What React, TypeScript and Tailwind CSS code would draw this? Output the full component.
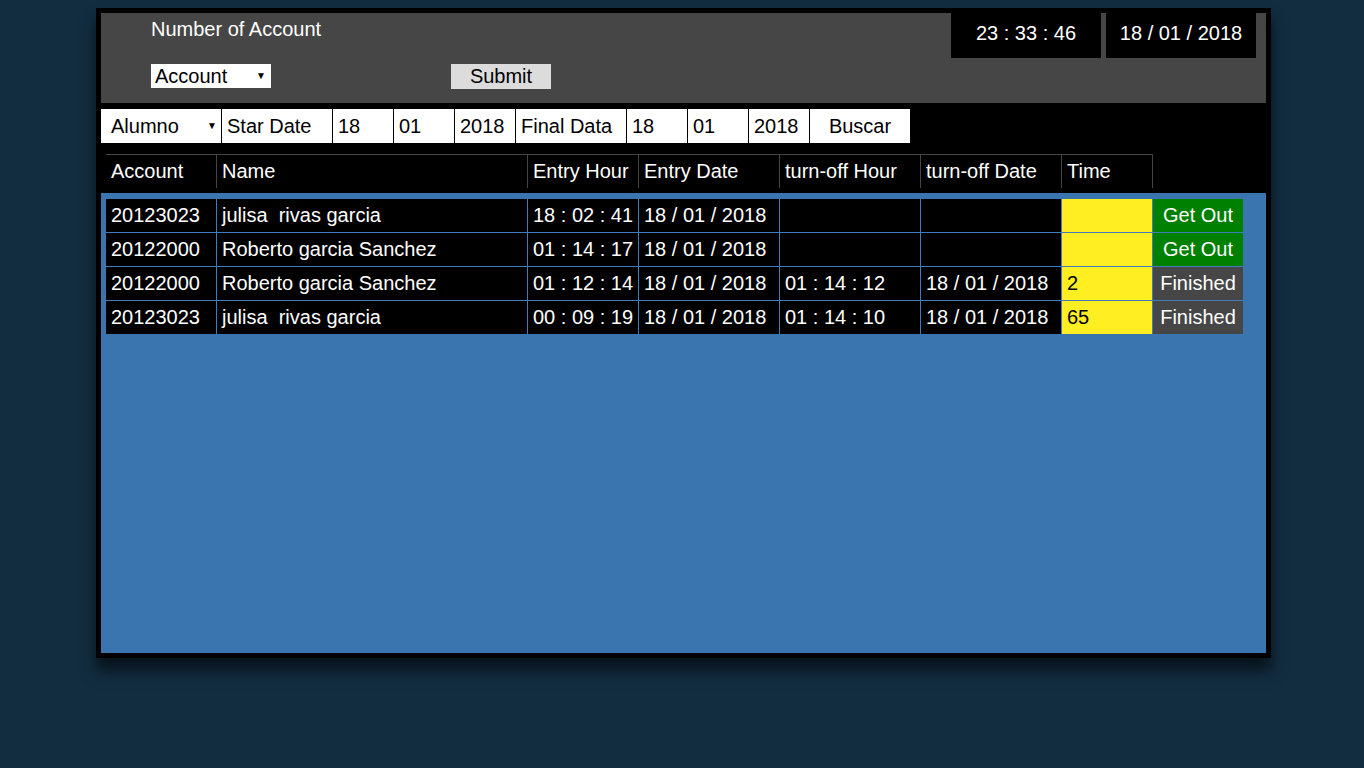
import React from "react";

type Row = {
  account: string;
  name: string;
  entryHour: string;
  entryDate: string;
  offHour: string;
  offDate: string;
  time: string;
  done: boolean;
};

const rows: Row[] = [
  { account: "20123023", name: "julisa\u00a0 rivas garcia", entryHour: "18 : 02 : 41", entryDate: "18 / 01 / 2018", offHour: "", offDate: "", time: "", done: false },
  { account: "20122000", name: "Roberto garcia Sanchez", entryHour: "01 : 14 : 17", entryDate: "18 / 01 / 2018", offHour: "", offDate: "", time: "", done: false },
  { account: "20122000", name: "Roberto garcia Sanchez", entryHour: "01 : 12 : 14", entryDate: "18 / 01 / 2018", offHour: "01 : 14 : 12", offDate: "18 / 01 / 2018", time: "2", done: true },
  { account: "20123023", name: "julisa\u00a0 rivas garcia", entryHour: "00 : 09 : 19", entryDate: "18 / 01 / 2018", offHour: "01 : 14 : 10", offDate: "18 / 01 / 2018", time: "65", done: true },
];

const headers = ["Account", "Name", "Entry Hour", "Entry Date", "turn-off Hour", "turn-off Date", "Time"];

function Arrow() {
  return <span className="text-[10px] leading-none text-black">▼</span>;
}

export default function App() {
  return (
    <div className="min-h-screen bg-[#122d40] pt-[8px] font-['Liberation_Sans',Arial,sans-serif] text-[20px] leading-[23px]">
      <div className="ml-[96px] flex h-[650px] w-[1175px] flex-col border-[5px] border-black bg-black shadow-[0_12px_14px_rgba(0,0,0,0.6)]">
        {/* top panel */}
        <div className="flex h-[90px] justify-between bg-[#464646]">
          <div className="flex flex-col pl-[50px] pt-[5px]">
            <span className="text-white">Number of Account</span>
            <div className="mt-[23px] flex items-start">
              <div className="flex h-[24px] w-[120px] items-center justify-between bg-white pl-[4px] pr-[5px] text-black">
                <span>Account</span>
                <Arrow />
              </div>
              <button className="ml-[180px] h-[25px] w-[100px] bg-[#dcdcdc] text-center text-black">Submit</button>
            </div>
          </div>
          <div className="flex gap-[5px] pr-[10px]">
            <div className="h-[45px] w-[150px] bg-black pt-[9px] text-center text-white">23 : 33 : 46</div>
            <div className="h-[45px] w-[150px] bg-black pt-[9px] text-center text-white">18 / 01 / 2018</div>
          </div>
        </div>

        {/* filter row */}
        <div className="mt-[6px] flex h-[34px] gap-px text-black">
          <div className="flex w-[120px] items-center justify-between bg-white pl-[10px] pr-[4px]">
            <span>Alumno</span>
            <Arrow />
          </div>
          <div className="flex w-[110px] items-center bg-white pl-[5px]">Star Date</div>
          <div className="flex w-[60px] items-center bg-white pl-[5px]">18</div>
          <div className="flex w-[60px] items-center bg-white pl-[5px]">01</div>
          <div className="flex w-[60px] items-center bg-white pl-[5px]">2018</div>
          <div className="flex w-[110px] items-center bg-white pl-[5px]">Final Data</div>
          <div className="flex w-[60px] items-center bg-white pl-[5px]">18</div>
          <div className="flex w-[60px] items-center bg-white pl-[5px]">01</div>
          <div className="flex w-[60px] items-center bg-white pl-[5px]">2018</div>
          <div className="flex w-[100px] items-center justify-center bg-white">Buscar</div>
        </div>

        {/* table header */}
        <div className="ml-[5px] mt-[11px] grid w-fit grid-cols-[111px_311px_111px_141px_141px_141px_91px] text-white">
          {headers.map((h) => (
            <div key={h} className="flex h-[34px] items-center border-t border-r border-[#444] pl-[5px]">
              {h}
            </div>
          ))}
        </div>

        {/* table body */}
        <div className="mt-[5px] flex-1 bg-[#3b75af] pl-[5px] pt-[6px]">
          <div className="grid w-fit grid-cols-[110px_310px_110px_140px_140px_140px_90px_90px] gap-px bg-[#3f7cbc] text-white">
            {rows.map((r, i) => (
              <React.Fragment key={i}>
                <div className="flex h-[33px] items-center bg-black pl-[5px]">{r.account}</div>
                <div className="flex h-[33px] items-center whitespace-pre bg-black pl-[5px]">{r.name}</div>
                <div className="flex h-[33px] items-center bg-black pl-[5px]">{r.entryHour}</div>
                <div className="flex h-[33px] items-center bg-black pl-[5px]">{r.entryDate}</div>
                <div className="flex h-[33px] items-center bg-black pl-[5px]">{r.offHour}</div>
                <div className="flex h-[33px] items-center bg-black pl-[5px]">{r.offDate}</div>
                <div className="flex h-[33px] items-center bg-[#ffee22] pl-[5px] text-black">{r.time}</div>
                {r.done ? (
                  <div className="flex h-[33px] items-center justify-center bg-[#464646]">Finished</div>
                ) : (
                  <div className="flex h-[33px] items-center justify-center bg-[#008000]">Get Out</div>
                )}
              </React.Fragment>
            ))}
          </div>
        </div>
      </div>
    </div>
  );
}
